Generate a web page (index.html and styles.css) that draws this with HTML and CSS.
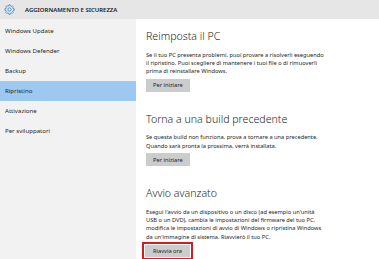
FILE: index.html
```html
<!DOCTYPE html>
<html lang="it">
<head>
<meta charset="utf-8">
<link rel="stylesheet" href="styles.css">
</head>
<body>
<div class="app">
  <header class="topbar">
    <svg class="gear" viewBox="0 0 24 24" width="11" height="11" aria-hidden="true">
      <path d="M10.3 2h3.4l.5 2.6 1.6.7 2.2-1.5 2.4 2.4-1.5 2.2.7 1.6 2.6.5v3.4l-2.6.5-.7 1.6 1.5 2.2-2.4 2.4-2.2-1.5-1.6.7-.5 2.6h-3.4l-.5-2.6-1.6-.7-2.2 1.5-2.4-2.4 1.5-2.2-.7-1.6L2 13.7v-3.4l2.6-.5.7-1.6-1.5-2.2 2.4-2.4 2.2 1.5 1.6-.7z" fill="none" stroke="#2d7dd2" stroke-width="1.6" stroke-linejoin="round"/>
      <circle cx="12" cy="12" r="3.6" fill="none" stroke="#2d7dd2" stroke-width="1.6"/>
    </svg>
    <span class="title">AGGIORNAMENTO E SICUREZZA</span>
  </header>
  <div class="main">
    <nav class="sidebar">
      <div class="nav-item">Windows Update</div>
      <div class="nav-item">Windows Defender</div>
      <div class="nav-item">Backup</div>
      <div class="nav-item active">Ripristino</div>
      <div class="nav-item">Attivazione</div>
      <div class="nav-item">Per sviluppatori</div>
    </nav>
    <section class="content">
      <div class="block">
        <h2 class="heading">Reimposta il PC</h2>
        <p class="text">Se il tuo PC presenta problemi, puoi provare a risolverli eseguendo<br>il ripristino. Puoi scegliere di mantenere i tuoi file o di rimuoverli<br>prima di reinstallare Windows.</p>
        <button class="btn">Per iniziare</button>
      </div>
      <div class="block">
        <h2 class="heading">Torna a una build precedente</h2>
        <p class="text">Se questa build non funziona, prova a tornare a una precedente.<br>Quando sarà pronta la prossima, verrà installata.</p>
        <button class="btn">Per iniziare</button>
      </div>
      <div class="block">
        <h2 class="heading">Avvio avanzato</h2>
        <p class="text">Esegui l'avvio da un dispositivo o un disco (ad esempio un'unità<br>USB o un DVD), cambia le impostazioni del firmware del tuo PC,<br>modifica le impostazioni di avvio di Windows o ripristina Windows<br>da un'immagine di sistema. Riavvierò il tuo PC.</p>
        <span class="highlight"><button class="btn">Riavvia ora</button></span>
      </div>
    </section>
  </div>
</div>
</body>
</html>
```
FILE: styles.css
```css
html, body {
  margin: 0;
  padding: 0;
}
body {
  width: 379px;
  height: 259px;
  overflow: hidden;
  background: #ffffff;
  font-family: "Noto Sans", "Open Sans", sans-serif;
  color: #1e1e1e;
}
.app {
  display: flex;
  flex-direction: column;
  height: 259px;
}
.topbar {
  height: 19px;
  background: #e6e6e6;
  display: flex;
  align-items: center;
  padding-left: 4px;
  gap: 10px;
  flex-shrink: 0;
}
.gear {
  display: block;
}
.title {
  font-size: 6px;
  font-weight: 600;
  color: #1a1a1a;
}
.main {
  flex: 1;
  display: flex;
}
.sidebar {
  width: 136px;
  background: #f2f2f2;
  padding-top: 2px;
  flex-shrink: 0;
}
.nav-item {
  height: 20px;
  line-height: 20px;
  padding-left: 5px;
  font-size: 6.1px;
  color: #1e1e1e;
}
.nav-item.active {
  background: #9dc8ef;
}
.content {
  flex: 1;
  padding: 10px 0 0 10px;
  display: flex;
  flex-direction: column;
  gap: 20px;
}
.block {
  display: flex;
  flex-direction: column;
  align-items: flex-start;
}
.heading {
  margin: 0;
  font-size: 10.6px;
  font-weight: 300;
  line-height: 14px;
  color: #1e1e1e;
}
.text {
  margin: 7.5px 0 3px;
  font-size: 5.7px;
  line-height: 8.4px;
  color: #1e1e1e;
}
.btn {
  font-family: inherit;
  font-size: 5.7px;
  height: 13px;
  padding: 0 7px;
  border: 0;
  background: #cccccc;
  color: #1e1e1e;
}
.highlight {
  border: 2px solid #d41a24;
  padding: 1px;
  margin-left: -4px;
  margin-top: -2px;
}
.highlight .btn {
  display: block;
  height: 12px;
  padding: 0 8px;
}
```
